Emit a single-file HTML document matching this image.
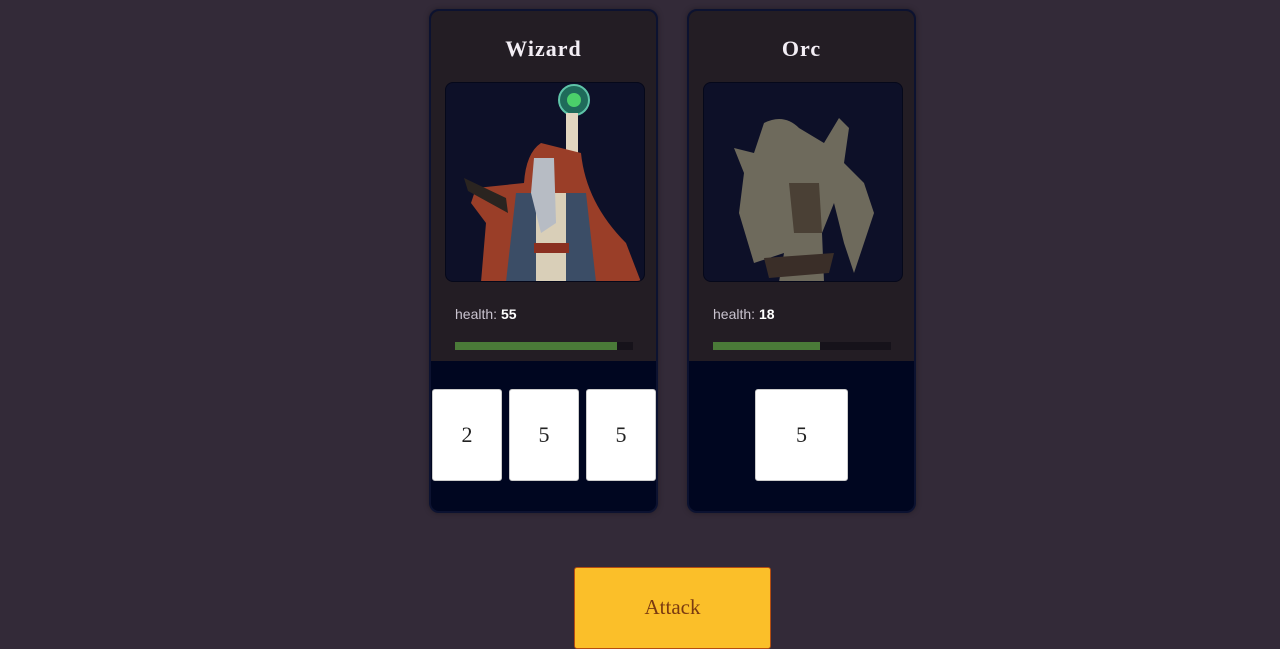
<!DOCTYPE html>
<html><head><style>
body{margin:0;background:#332a38;width:1280px;height:640px;overflow:hidden;font-family:"Liberation Sans",sans-serif}
.card{position:absolute;top:9px;width:225px;height:500px;border:2px solid #0c1230;border-radius:10px;overflow:hidden;background:#000620;box-shadow:0 0 6px rgba(0,0,0,.35)}
.top{height:350px;background:#231d24;position:relative}
.title{position:absolute;top:25px;width:100%;text-align:center;color:#f3eef5;font-weight:bold;font-size:22px;letter-spacing:1px;font-family:"Liberation Serif",serif}
.img{position:absolute;left:14px;top:71px;width:198px;height:198px;background:#0d1028;border-radius:8px;border:1px solid #05081a;overflow:hidden}
.hp{position:absolute;left:24px;top:295px;color:#c9c3cf;font-size:14px}
.hp b{color:#fff}
.bar{position:absolute;left:24px;top:331px;width:178px;height:8px;background:#16121a}
.bar i{display:block;height:100%;background:#4a7a38}
.die{position:absolute;top:378px;height:90px;background:#fff;border-radius:3px;border:1px solid #ccc;display:flex;align-items:center;justify-content:center;font-family:"Liberation Serif",serif;font-size:22px;color:#222}
.btn{position:absolute;left:574px;top:567px;width:195px;height:80px;background:#fbbf29;border:1px solid #b44d10;border-radius:3px;color:#7a3a10;font-family:"Liberation Serif",serif;font-size:21px;text-align:center;line-height:78px}
</style></head><body>
<div class="card" style="left:429px">
 <div class="top">
  <div class="title">Wizard</div>
  <div class="img"><svg width="200" height="199">
   <circle cx="128" cy="17" r="15" fill="#1f6b5a" stroke="#5ec4a8" stroke-width="2"/><circle cx="128" cy="17" r="7" fill="#4bd06a"/>
   <rect x="120" y="30" width="12" height="60" fill="#e2d6c0"/>
   <path d="M95 60 Q80 70 78 100 L30 105 L25 120 L40 140 L35 199 L195 199 L180 160 Q140 120 135 70 Z" fill="#9a3e28"/>
   <path d="M70 110 L60 199 L150 199 L140 110 Z" fill="#3b4d66"/>
   <rect x="90" y="110" width="30" height="89" fill="#d9cfb8"/>
   <path d="M88 75 L108 75 L110 140 L95 150 L85 110 Z" fill="#b7bcc4"/>
   <rect x="88" y="160" width="35" height="10" fill="#8a3020"/>
   <path d="M18 95 L60 115 L62 130 L22 108 Z" fill="#2a2420"/>
  </svg></div>
  <div class="hp">health: <b>55</b></div>
  <div class="bar"><i style="width:162px"></i></div>
 </div>
 <div class="die" style="left:1px;width:68px">2</div>
 <div class="die" style="left:78px;width:68px">5</div>
 <div class="die" style="left:155px;width:68px">5</div>
</div>
<div class="card" style="left:687px">
 <div class="top">
  <div class="title">Orc</div>
  <div class="img"><svg width="200" height="199">
   <path d="M60 40 Q80 30 95 45 L120 60 L135 35 L145 45 L140 80 L160 100 L170 130 L150 190 L140 160 L130 120 L118 150 L120 199 L75 199 L80 170 L50 180 L35 130 L40 90 L30 65 L50 70 Z" fill="#6e6a5c"/>
   <path d="M85 100 L115 100 L118 150 L90 150 Z" fill="#4a4035"/>
   <path d="M60 175 L130 170 L125 190 L65 195 Z" fill="#3a2e28"/>
  </svg></div>
  <div class="hp">health: <b>18</b></div>
  <div class="bar"><i style="width:107px"></i></div>
 </div>
 <div class="die" style="left:66px;width:91px">5</div>
</div>
<div class="btn">Attack</div>
</body></html>
